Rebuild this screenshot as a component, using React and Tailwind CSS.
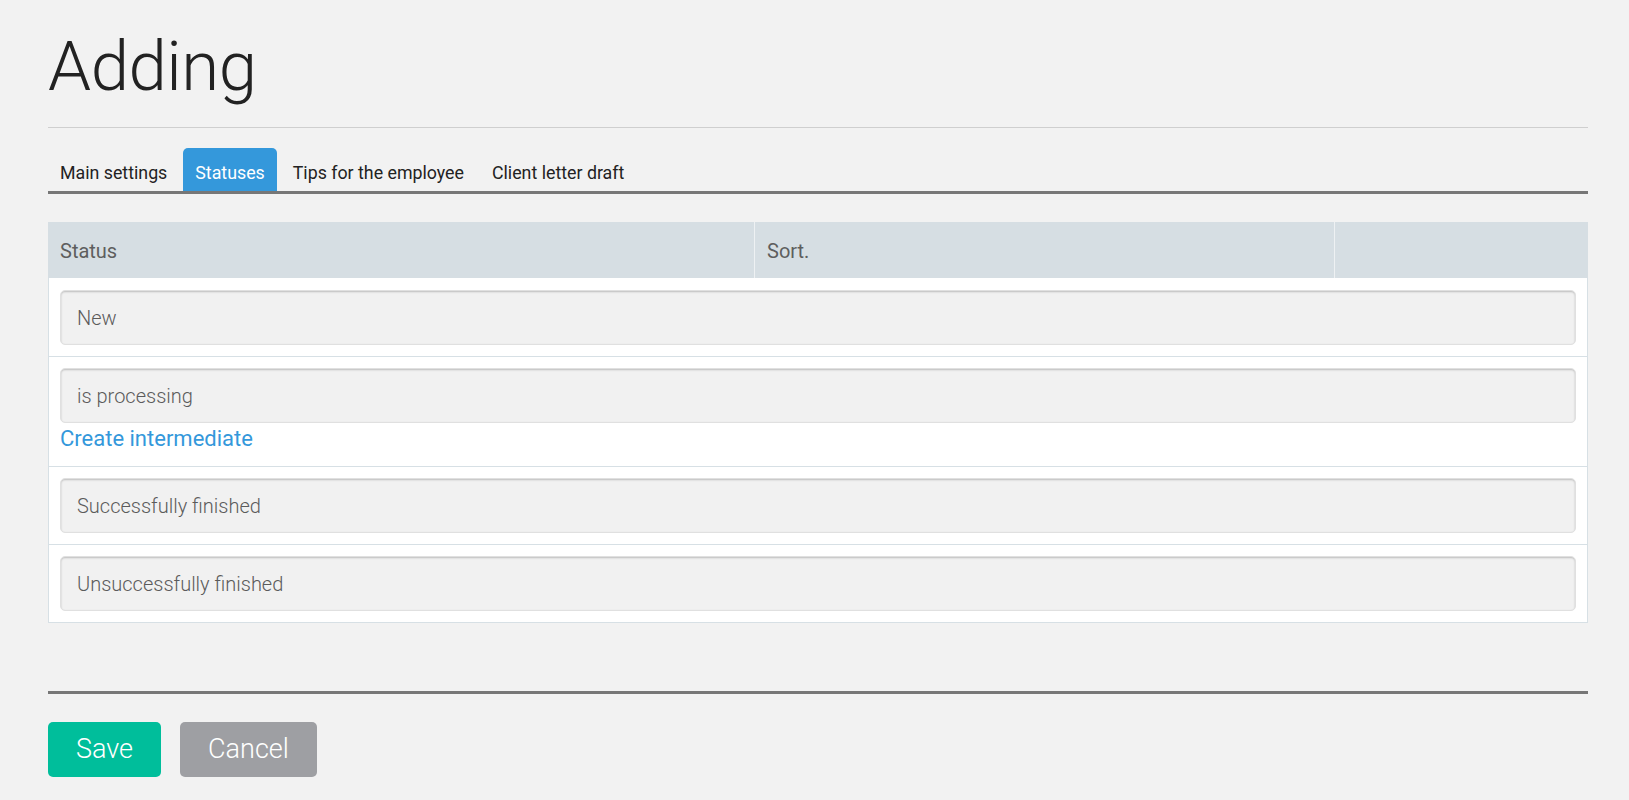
import React from "react";

const tabs = ["Main settings", "Statuses", "Tips for the employee", "Client letter draft"];

const statuses = [
  { name: "New" },
  { name: "is processing", intermediate: true },
  { name: "Successfully finished" },
  { name: "Unsuccessfully finished" }
];

const StatusInput = ({ value }) => (
  <div className="h-[55px] flex items-center pl-4 rounded-[5px] bg-[#f1f1f1] border border-[#e0e0e0] shadow-[inset_0_1px_2px_rgba(0,0,0,0.22)] text-[20px] font-light text-[#5b5b5b]">
    {value}
  </div>
);

export default function App() {
  return (
    <div className="min-h-[800px] bg-[#f2f2f2] pt-[28px] pl-[48px] pr-[41px] font-['Roboto',sans-serif]">
      <h1 className="text-[69px] leading-[77px] font-light text-[#222] tracking-[-0.5px]">Adding</h1>
      <div className="mt-[22px] border-t border-[#cfcfcf]"></div>

      <div className="mt-[20px] flex border-b-[3px] border-[#777]">
        {tabs.map((tab) => (
          <div
            key={tab}
            className={`mr-1 px-3 pt-[14px] pb-[7px] text-[17.8px] leading-[22px] rounded-t-[5px] ${
              tab === "Statuses" ? "bg-[#3498db] text-white" : "text-[#222]"
            }`}
          >
            {tab}
          </div>
        ))}
      </div>

      <div className="mt-[28px]">
        <div className="grid grid-cols-[706px_580px_1fr] bg-[#d6dee3] text-[20px] leading-[22px] text-[#5e5e5e]">
          <div className="pt-[18px] pb-[16px] px-3">Status</div>
          <div className="pt-[18px] pb-[16px] px-3 border-l border-[#eef1f3]">Sort.</div>
          <div className="border-l border-[#eef1f3]"></div>
        </div>
        <div className="bg-white border-x border-b border-[#d7e0e5]">
          {statuses.map((s, i) => (
            <div
              key={s.name}
              className={`px-[11px] pb-[11px] ${i === 0 ? "pt-[12px]" : "pt-[11px]"} ${
                i < statuses.length - 1 ? "border-b border-[#d7e0e5]" : ""
              }`}
            >
              <StatusInput value={s.name} />
              {s.intermediate && (
                <div className="text-[22px] leading-[32px] text-[#3498db]">Create intermediate</div>
              )}
            </div>
          ))}
        </div>
      </div>

      <div className="mt-[68px] border-t-[3px] border-[#777]"></div>

      <div className="mt-[28px] flex gap-[19px]">
        <button className="h-[55px] px-7 rounded-[5px] bg-[#00be9b] text-white text-[27px] font-light">Save</button>
        <button className="h-[55px] px-7 rounded-[5px] bg-[#9e9fa3] text-white text-[27px] font-light">Cancel</button>
      </div>
    </div>
  );
}
